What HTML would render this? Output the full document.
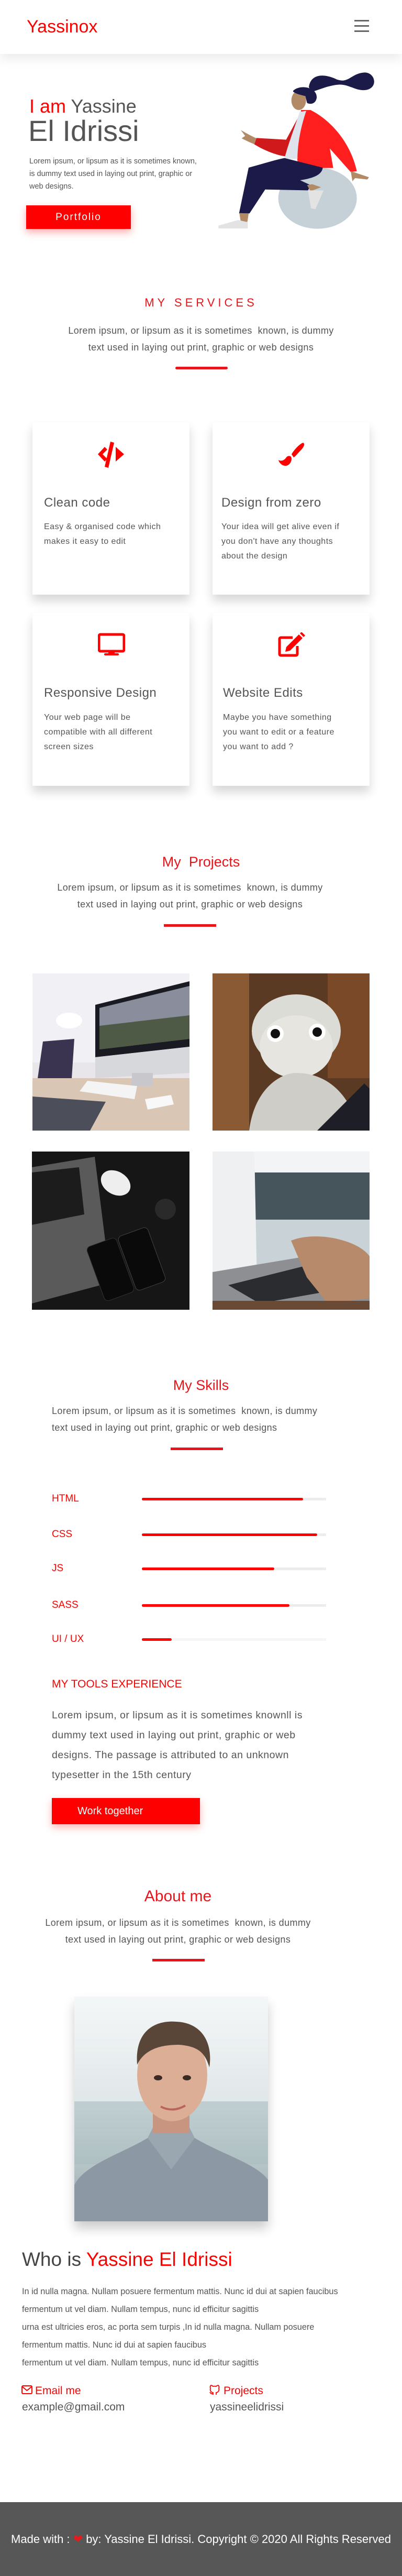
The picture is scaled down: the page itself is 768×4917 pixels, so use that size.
<!DOCTYPE html>
<html><head><meta charset="utf-8"><style>
*{margin:0;padding:0;box-sizing:border-box}
body{width:768px;height:4917px;position:relative;background:#fff;font-family:"Liberation Sans",sans-serif;color:#555;overflow:hidden}
.a{position:absolute}
.n{font-family:"Liberation Sans Narrow","Liberation Sans",sans-serif}
.red{color:#f00}
.h2{position:absolute;left:0;width:768px;text-align:center;color:#e8141a;font-size:27px;line-height:30px}
.p{position:absolute;font-size:18px;letter-spacing:.4px;line-height:32px;color:#555;white-space:nowrap}
.bar{position:absolute;height:5px;width:100px;background:#e8141a;border-radius:3px}
.card{position:absolute;width:300px;background:#fff;box-shadow:0 12px 18px rgba(0,0,0,.16)}
.card h3{position:absolute;left:22px;font-weight:normal;font-size:24px;letter-spacing:.5px;color:#555;white-space:nowrap}
.card p{position:absolute;left:22px;font-size:16px;letter-spacing:.5px;line-height:28px;color:#555;white-space:nowrap}
.card svg{position:absolute;top:37px;left:125px}
.sk{position:absolute;left:99px;font-size:19px;color:#f00;line-height:20px}
.track{position:absolute;left:271px;width:352px;height:5px;background:#ececec}
.fill{height:5px;background:#f00;border-radius:3px}
</style></head><body>

<!-- header -->
<div class="a" style="left:0;top:0;width:768px;height:103px;background:#fff;box-shadow:0 8px 22px rgba(0,0,0,.09);z-index:2"></div>
<div class="a n red" style="left:51px;top:32px;font-size:34px;line-height:38px;z-index:3">Yassinox</div>
<div class="a" style="left:677px;top:38px;width:28px;z-index:3">
<div style="height:3px;background:#666;margin-bottom:7px"></div><div style="height:3px;background:#666;margin-bottom:7px"></div><div style="height:3px;background:#666"></div></div>

<!-- hero -->
<div class="a n" style="left:56px;top:183px;font-size:36px;line-height:40px;color:#555"><span class="red">I am</span> Yassine</div>
<div class="a n" style="left:54px;top:220px;font-size:56px;line-height:60px;color:#555">El Idrissi</div>
<div class="a n" style="left:56px;top:296px;font-size:14.5px;line-height:24px;color:#555">Lorem ipsum, or lipsum as it is sometimes known,<br>is dummy text used in laying out print, graphic or<br>web designs.</div>
<div class="a n" style="left:50px;top:392px;width:200px;height:45px;background:#f00;box-shadow:0 6px 14px rgba(255,0,0,.35);color:#fff;font-size:19px;letter-spacing:2px;text-align:center;line-height:45px">Portfolio</div>
<svg class="a" style="left:380px;top:120px" width="388" height="330" viewBox="0 0 1164 990">
<ellipse cx="680" cy="775" rx="225" ry="175" fill="#c5d0d7"/>
<path d="M630 140 C640 60 720 60 790 95 C860 120 870 60 950 55 C1010 55 1030 140 960 155 C900 165 860 120 800 125 C740 130 700 150 650 165Z" fill="#1b1a48"/>
<ellipse cx="572" cy="215" rx="42" ry="55" fill="#b38a66"/>
<path d="M540 160 C580 120 680 140 675 200 C670 235 640 240 620 230 L610 190 C590 185 560 180 540 165Z" fill="#1b1a48"/>
<path d="M585 270 L640 270 C760 330 870 460 905 620 L870 625 L750 490 L770 602 L570 602 L560 520 L580 350Z" fill="#ff1f1f"/>
<path d="M578 295 L500 440 L330 430 L315 465 C380 505 450 530 495 535 L530 440Z" fill="#d0191b"/>
<path d="M578 280 L615 275 C580 380 565 470 565 550 L490 550 C510 470 545 380 578 280Z" fill="#dfe4ec"/>
<path d="M240 385 C260 395 290 415 330 432 L318 466 C290 455 260 440 245 432 L265 418 Z" fill="#b38a66"/>
<path d="M870 620 L975 655 L965 668 L895 660 L880 678Z" fill="#b38a66"/>
<path d="M490 545 L710 600 C705 640 660 660 580 672 L640 700 L625 730 L380 725 L290 862 L230 862 L285 600 C360 580 420 560 490 545Z" fill="#1b1a48"/>
<path d="M620 700 L650 695 L700 712 L640 735Z" fill="#b38a66"/>
<path d="M625 730 L715 730 L668 838 L642 832Z" fill="#e3e3e3"/>
<path d="M232 860 L285 862 L278 910 L240 912Z" fill="#b38a66"/>
<path d="M225 900 L280 912 L280 948 L112 948 L112 932 Z" fill="#e3e3e3"/>
</svg>

<!-- services -->
<div class="h2" style="top:563px;font-size:22px;letter-spacing:6px">MY SERVICES</div>
<div class="p" style="left:0;width:768px;text-align:center;top:615px">Lorem ipsum, or lipsum as it is sometimes&nbsp; known, is dummy<br>text used in laying out print, graphic or web designs</div>
<div class="bar" style="left:335px;top:700px"></div>

<div class="card" style="left:62px;top:806px;height:329px">
<svg width="52" height="50" viewBox="0 0 52 50"><path d="M0 24 L13 10 L18 15 L9 24 L18 33 L13 38Z" fill="#f00"/><path d="M24 0 L31 2 L20 50 L13 48Z" fill="#f00"/><path d="M34 10 L50 24 L34 38Z" fill="#f00"/></svg>
<h3 style="top:140px">Clean code</h3><p style="top:186px">Easy &amp; organised code which<br>makes it easy to edit</p></div>
<div class="card" style="left:406px;top:806px;height:329px">
<svg width="52" height="50" viewBox="0 0 52 50"><path d="M26 24 C32 14 42 4 48 2 C52 4 50 10 44 16 C38 22 34 28 30 30Z" fill="#f00"/><path d="M24 28 C28 30 26 44 16 46 C8 47 2 40 1 35 C6 38 12 36 16 30 C18 27 22 27 24 28Z" fill="#f00"/></svg>
<h3 style="top:140px;left:17px">Design from zero</h3><p style="top:186px;left:17px">Your idea will get alive even if<br>you don't have any thoughts<br>about the design</p></div>
<div class="card" style="left:62px;top:1170px;height:330px">
<svg width="52" height="50" viewBox="0 0 52 50"><rect x="2" y="4" width="48" height="32" rx="3" fill="none" stroke="#f00" stroke-width="5"/><rect x="20" y="36" width="12" height="6" fill="#f00"/><rect x="12" y="40" width="28" height="4" rx="2" fill="#f00"/></svg>
<h3 style="top:139px">Responsive Design</h3><p style="top:186px">Your web page will be<br>compatible with all different<br>screen sizes</p></div>
<div class="card" style="left:406px;top:1170px;height:330px">
<svg width="52" height="50" viewBox="0 0 52 50"><path d="M28 10 L6 10 Q3 10 3 13 L3 41 Q3 44 6 44 L34 44 Q37 44 37 41 L37 26" fill="none" stroke="#f00" stroke-width="5"/><path d="M16 28 L40 4 L47 11 L23 35 L14 37Z" fill="#f00"/><path d="M42 2 L45 -1 L52 6 L49 9Z" fill="#f00"/></svg>
<h3 style="top:139px;left:20px">Website Edits</h3><p style="top:186px;left:20px">Maybe you have something<br>you want to edit or a feature<br>you want to add ?</p></div>

<!-- projects -->
<div class="h2" style="top:1630px">My&nbsp; Projects</div>
<div class="p" style="left:-21px;width:768px;text-align:center;top:1678px">Lorem ipsum, or lipsum as it is sometimes&nbsp; known, is dummy<br>text used in laying out print, graphic or web designs</div>
<div class="bar" style="left:313px;top:1764px;border-radius:0"></div>

<svg class="a" style="left:62px;top:1858px" width="300" height="300" viewBox="0 0 300 300">
<rect width="300" height="300" fill="#e8e6ea"/><rect x="0" y="0" width="300" height="170" fill="#f1f0f4"/>
<rect x="0" y="200" width="300" height="100" fill="#d9c6b4"/>
<path d="M120 60 L300 15 L300 140 L120 160Z" fill="#1a1a22"/><path d="M128 66 L300 24 L300 125 L128 145Z" fill="#8a8e9c"/><path d="M128 100 L300 80 L300 125 L128 145Z" fill="#4f5a46"/>
<path d="M120 160 L300 140 L300 190 L120 200Z" fill="#d7d8dc"/><rect x="190" y="190" width="40" height="25" fill="#c8c8cc"/>
<path d="M105 205 L200 215 L195 240 L90 225Z" fill="#f4f4f4"/>
<path d="M0 235 L140 245 L110 300 L0 300Z" fill="#4c4e5a"/>
<path d="M20 130 L80 125 L75 200 L10 200Z" fill="#3b3450"/>
<path d="M215 240 L265 232 L270 250 L220 260Z" fill="#f8f8f8"/>
<ellipse cx="70" cy="90" rx="25" ry="15" fill="#fff"/>
</svg>
<svg class="a" style="left:406px;top:1858px" width="300" height="300" viewBox="0 0 300 300">
<rect width="300" height="300" fill="#5a3a22"/><rect x="0" y="0" width="70" height="300" fill="#8a5a34"/><rect x="220" y="0" width="80" height="200" fill="#7a4a28"/>
<ellipse cx="160" cy="110" rx="85" ry="70" fill="#dcdcd6"/><ellipse cx="160" cy="140" rx="70" ry="60" fill="#e6e5e0"/>
<circle cx="120" cy="115" r="16" fill="#fff"/><circle cx="120" cy="115" r="9" fill="#111"/><circle cx="200" cy="112" r="16" fill="#fff"/><circle cx="200" cy="112" r="9" fill="#111"/>
<path d="M70 300 C80 220 130 190 160 190 C210 190 260 220 280 300Z" fill="#cfcdc8"/>
<path d="M200 300 L290 210 L300 220 L300 300Z" fill="#1e1e26"/>
</svg>
<svg class="a" style="left:61px;top:2198px" width="301" height="302" viewBox="0 0 301 302">
<rect width="301" height="302" fill="#161616"/><path d="M0 30 L120 10 L150 250 L0 290Z" fill="#5a5a5a"/><path d="M0 40 L90 30 L100 120 L0 140Z" fill="#1c1c1c"/>
<ellipse cx="160" cy="60" rx="30" ry="22" fill="#eee" transform="rotate(30 160 60)"/>
<rect x="180" y="150" width="60" height="110" rx="8" fill="#0a0a0a" stroke="#444" transform="rotate(-20 210 205)"/>
<rect x="120" y="170" width="60" height="110" rx="8" fill="#0a0a0a" stroke="#333" transform="rotate(-20 150 225)"/>
<circle cx="255" cy="110" r="20" fill="#2a2a2a"/>
</svg>
<svg class="a" style="left:406px;top:2198px" width="300" height="302" viewBox="0 0 300 302">
<rect width="300" height="302" fill="#c9d2d6"/><rect x="0" y="0" width="300" height="60" fill="#f2f4f6"/><rect x="80" y="40" width="220" height="90" fill="#46545c"/>
<path d="M0 0 L80 0 L85 250 L0 230Z" fill="#eef0f2"/>
<path d="M0 230 L180 200 L300 250 L300 302 L0 302Z" fill="#8d8f93"/>
<path d="M30 255 L190 215 L260 260 L90 290Z" fill="#2a2c30"/>
<path d="M150 170 C200 150 280 170 300 200 L300 280 L220 290 L180 240Z" fill="#b88a6c"/>
<rect x="0" y="285" width="300" height="17" fill="#6a4a34"/>
</svg>

<!-- skills -->
<div class="h2" style="top:2629px">My Skills</div>
<div class="p" style="left:99px;top:2677px">Lorem ipsum, or lipsum as it is sometimes&nbsp; known, is dummy<br>text used in laying out print, graphic or web designs</div>
<div class="bar" style="left:326px;top:2763px;border-radius:0"></div>

<div class="sk" style="top:2851px">HTML</div><div class="track" style="top:2859px"><div class="fill" style="width:308px"></div></div>
<div class="sk" style="top:2919px">CSS</div><div class="track" style="top:2927px"><div class="fill" style="width:335px"></div></div>
<div class="sk" style="top:2984px">JS</div><div class="track" style="top:2992px"><div class="fill" style="width:253px"></div></div>
<div class="sk" style="top:3054px">SASS</div><div class="track" style="top:3062px"><div class="fill" style="width:282px"></div></div>
<div class="sk" style="top:3119px">UI / UX</div><div class="track" style="top:3127px;background:#f5f5f5"><div class="fill" style="width:57px"></div></div>

<div class="a" style="left:99px;top:3203px;font-size:21px;color:#f00">MY TOOLS EXPERIENCE</div>
<div class="a" style="left:99px;top:3255px;font-size:19.5px;letter-spacing:.5px;line-height:38px;color:#555;white-space:nowrap">Lorem ipsum, or lipsum as it is sometimes knownll is<br>dummy text used in laying out print, graphic or web<br>designs. The passage is attributed to an unknown<br>typesetter in the 15th century</div>
<div class="a" style="left:99px;top:3432px;width:283px;height:50px;background:#f00;box-shadow:0 6px 14px rgba(255,0,0,.3);color:#fff;font-size:20px;line-height:50px;padding-left:49px">Work together</div>

<!-- about -->
<div class="h2" style="top:3605px;left:-44px;font-size:30px">About me</div>
<div class="p" style="left:-44px;width:768px;text-align:center;top:3654px">Lorem ipsum, or lipsum as it is sometimes&nbsp; known, is dummy<br>text used in laying out print, graphic or web designs</div>
<div class="bar" style="left:291px;top:3739px;border-radius:0"></div>

<svg class="a" style="left:142px;top:3811px;box-shadow:0 14px 20px rgba(0,0,0,.2)" width="370" height="429" viewBox="0 0 370 429">
<defs><linearGradient id="bg" x1="0" y1="0" x2="0" y2="1"><stop offset="0" stop-color="#f4f7f8"/><stop offset=".5" stop-color="#dfe6e8"/><stop offset="1" stop-color="#8fa3a6"/></linearGradient></defs>
<rect width="370" height="429" fill="url(#bg)"/>
<rect x="0" y="200" width="370" height="120" fill="#a9bcbf" opacity=".6"/>
<path d="M0 360 C20 320 90 300 140 270 L230 270 C280 300 350 320 370 350 L370 429 L0 429Z" fill="#8c98a3"/>
<path d="M140 270 L185 330 L230 270 L215 240 L155 240Z" fill="#9aa6b0"/>
<rect x="150" y="210" width="70" height="50" fill="#c89680"/>
<ellipse cx="187" cy="150" rx="67" ry="88" fill="#dcae96"/>
<path d="M120 130 C115 60 160 45 195 48 C245 50 265 90 258 135 C250 110 240 95 200 92 C165 92 135 100 120 130Z" fill="#5a4638"/>
<ellipse cx="160" cy="155" rx="8" ry="5" fill="#3a2a22"/><ellipse cx="215" cy="155" rx="8" ry="5" fill="#3a2a22"/>
<path d="M165 210 Q188 222 212 208" stroke="#b8655e" stroke-width="4" fill="none"/>
</svg>

<div class="a" style="left:42px;top:4292px;font-size:37px;line-height:42px;color:#444">Who is <span class="red">Yassine El Idrissi</span></div>
<div class="a" style="left:42px;top:4357px;font-size:16.3px;line-height:34px;color:#555;white-space:nowrap">In id nulla magna. Nullam posuere fermentum mattis. Nunc id dui at sapien faucibus<br>fermentum ut vel diam. Nullam tempus, nunc id efficitur sagittis<br>urna est ultricies eros, ac porta sem turpis ,In id nulla magna. Nullam posuere<br>fermentum mattis. Nunc id dui at sapien faucibus<br>fermentum ut vel diam. Nullam tempus, nunc id efficitur sagittis</div>

<svg class="a" style="left:41px;top:4553px" width="21" height="17" viewBox="0 0 21 17"><rect x="1" y="1" width="19" height="15" rx="2" fill="none" stroke="#f00" stroke-width="2"/><path d="M2 3 L10.5 10 L19 3" fill="none" stroke="#f00" stroke-width="2"/></svg>
<div class="a red" style="left:67px;top:4552px;font-size:21px;line-height:24px">Email me</div>
<div class="a" style="left:42px;top:4583px;font-size:21px;line-height:24px;color:#555">example@gmail.com</div>
<svg class="a" style="left:400px;top:4551px" width="20" height="22" viewBox="0 0 20 22"><path d="M7 20 L7 16 C2 15 1 11 2 8 C1 5 2 3 3 2 C5 2 6 3 7 4 C9 3.5 11 3.5 13 4 C14 3 15 2 17 2 C18 3 19 5 18 8 C19 11 18 15 13 16 L13 20 M7 18 C4 19 2 17 1 15" fill="none" stroke="#f00" stroke-width="1.8"/></svg>
<div class="a red" style="left:427px;top:4552px;font-size:21px;line-height:24px">Projects</div>
<div class="a" style="left:401px;top:4583px;font-size:21px;line-height:24px;color:#555">yassineelidrissi</div>

<!-- footer -->
<div class="a" style="left:0;top:4776px;width:768px;height:141px;background:#575757"></div>
<div class="a n" style="left:0;top:4834px;width:768px;text-align:center;color:#fff;font-size:22px;line-height:26px;white-space:nowrap">Made with : <span style="color:#e31b1b">&#10084;</span> by: Yassine El Idrissi. Copyright © 2020 All Rights Reserved</div>
</body></html>
